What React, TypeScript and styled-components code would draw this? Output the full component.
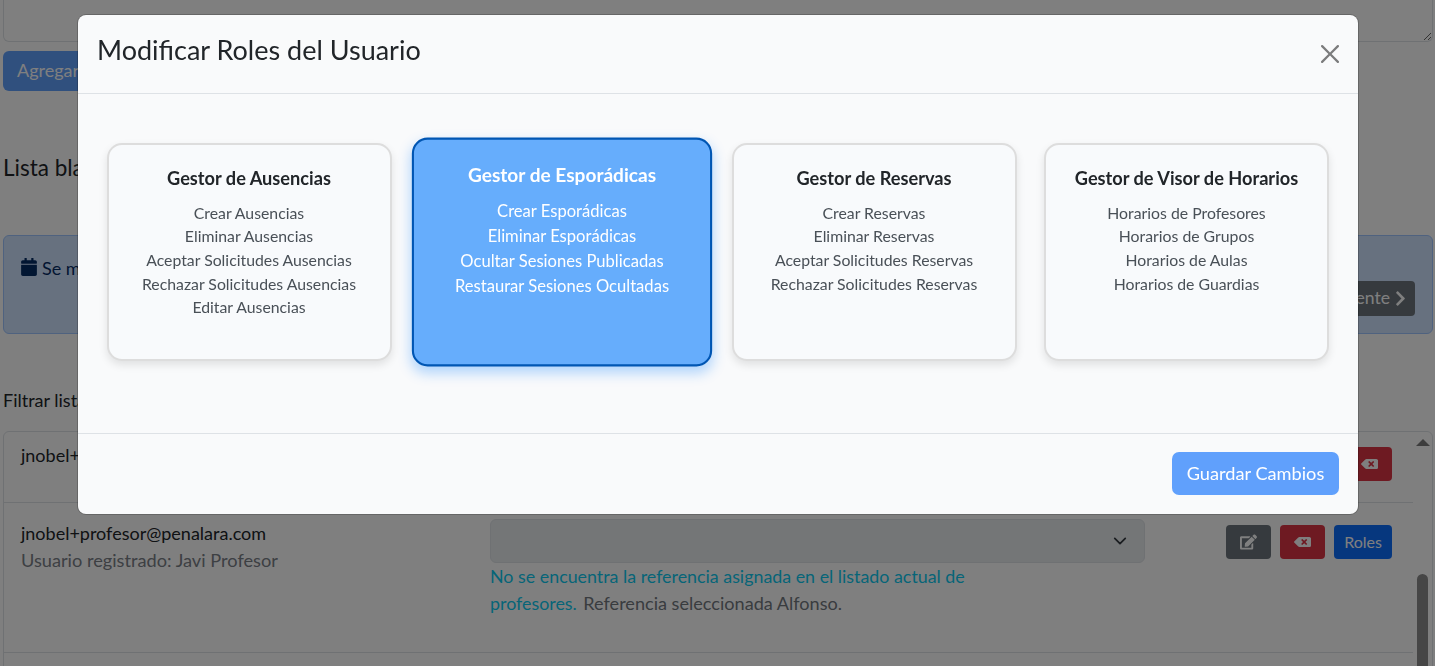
import React from "react";
import styled, { createGlobalStyle } from "styled-components";
import { FaBackspace, FaCalendar, FaChevronRight, FaEdit } from "react-icons/fa";

const Global = createGlobalStyle`
  html, body { margin: 0; padding: 0; height: 100%; overflow: hidden; background: #fff; }
  * { box-sizing: border-box; }
  body { font-family: Lato, "Liberation Sans", sans-serif; color: #212529; font-size: 18px; line-height: 1.5; }
`;

const Page = styled.div`
  height: 666px;
  overflow: hidden;
  padding: 0 2px 0 3px;
  display: flex;
  flex-direction: column;
`;

const NotesArea = styled.textarea`
  display: block;
  flex: none;
  width: 100%;
  height: 42px;
  border: 1px solid #dee2e6;
  border-top: 0;
  border-radius: 0 0 6px 6px;
  background: #fff;
  resize: vertical;
`;

const AddButton = styled.button`
  flex: none;
  align-self: flex-start;
  margin-top: 9px;
  height: 40px;
  padding: 0 14px 2px;
  border: 0;
  border-radius: 6px;
  background: #0d6efd;
  color: #fff;
  opacity: 0.65;
  font: inherit;
`;

const Heading = styled.h3`
  flex: none;
  margin: 62px 0 0;
  font-size: 22.5px;
  font-weight: 400;
  line-height: 30px;
`;

const Notice = styled.div`
  flex: none;
  margin-top: 52px;
  height: 99px;
  padding: 19px 17px 17px;
  display: flex;
  justify-content: space-between;
  background: #cfe2ff;
  border: 1px solid #9ec5fe;
  border-radius: 6px;
  color: #052c65;
`;

const NoticeText = styled.div`
  display: flex;
  gap: 5px;
  align-items: flex-start;
  svg { margin-top: 3px; width: 16px; height: 18px; }
`;

const NextButton = styled.button`
  align-self: flex-end;
  height: 35px;
  padding: 0 9px 2px 10px;
  display: flex;
  align-items: center;
  gap: 5px;
  border: 0;
  border-radius: 4px;
  background: #6c757d;
  color: #fff;
  font-family: inherit;
  font-size: 17.6px;
  svg { width: 11px; height: 17px; margin-top: 2px; }
`;

const FilterLabel = styled.div`
  flex: none;
  margin-top: 53px;
  height: 26px;
  font-size: 18px;
  line-height: 26px;
`;

const ListBox = styled.div`
  flex: none;
  margin-top: 18px;
  height: 300px;
  display: flex;
  border: 1px solid #dee2e6;
  border-radius: 6px;
  overflow: hidden;
`;

const Rows = styled.div`
  flex: 1;
  min-width: 0;
`;

const Row = styled.div<{ $top: number; $height: number }>`
  height: ${(p) => p.$height}px;
  padding: ${(p) => p.$top}px 21px 0 17px;
  display: grid;
  grid-template-columns: 469px 655px 1fr;
  border-bottom: 1px solid #dee2e6;
`;

const Email = styled.div`
  padding-top: 1px;
  line-height: 26px;
`;

const Muted = styled.div`
  margin-top: 1px;
  font-size: 18.2px;
  line-height: 27px;
  color: #7a8087;
`;

const RefSelect = styled.div`
  height: 44px;
  padding-right: 17px;
  display: flex;
  align-items: center;
  justify-content: flex-end;
  background: #e9ecef;
  border: 1px solid #dee2e6;
  border-radius: 6px;
  color: #343a40;
  svg { width: 14px; height: 14px; }
`;

const RefNote = styled.div`
  max-width: 500px;
  font-size: 17.85px;
  line-height: 27px;
  color: #72787f;
`;

const Info = styled.span`
  color: #0dcaf0;
`;

const RefName = styled.span`
  margin-left: 2px;
  font-size: 18.1px;
`;

const Actions = styled.div`
  margin-top: 6px;
  display: flex;
  justify-content: flex-end;
  align-items: flex-start;
  gap: 9px;
`;

const ActionButton = styled.button<{ $bg: string; $wide?: boolean }>`
  width: ${(p) => (p.$wide ? 58 : 45)}px;
  height: 34px;
  padding: 0 0 ${(p) => (p.$wide ? 2 : 0)}px;
  display: flex;
  align-items: center;
  justify-content: center;
  border: 0;
  border-radius: 4px;
  background: ${(p) => p.$bg};
  color: #fff;
  font-family: inherit;
  font-size: 16px;
  svg { width: 17px; height: 16px; }
`;

const ScrollColumn = styled.div`
  flex: none;
  width: 19px;
  display: flex;
  flex-direction: column;
  align-items: center;
`;

const ScrollArrow = styled.div`
  margin-top: 7px;
  width: 0;
  height: 0;
  border-left: 7px solid transparent;
  border-right: 7px solid transparent;
  border-bottom: 7px solid #7a7a7a;
`;

const ScrollThumb = styled.div`
  margin-top: 128px;
  width: 11px;
  height: 140px;
  border-radius: 6px;
  background: #8c8c8c;
`;

const Backdrop = styled.div`
  position: fixed;
  inset: 0;
  background: rgba(0, 0, 0, 0.5);
  padding: 15px 0 0 78px;
`;

const Modal = styled.div`
  width: 1280px;
  height: 499px;
  display: flex;
  flex-direction: column;
  background: #f9fafb;
  border-radius: 8px;
  box-shadow: 0 0 0 1px rgba(0, 0, 0, 0.2);
`;

const ModalHeader = styled.div`
  flex: none;
  height: 79px;
  padding: 15px 19px 0;
  display: flex;
  justify-content: space-between;
  border-bottom: 1px solid #dee2e6;
`;

const ModalTitle = styled.h5`
  margin: 0;
  font-size: 27px;
  font-weight: 400;
  line-height: 40px;
`;

const CloseButton = styled.button`
  width: 18px;
  height: 18px;
  margin-top: 15px;
  padding: 0;
  border: 0;
  background: none;
  opacity: 0.5;
  svg { display: block; width: 18px; height: 18px; }
`;

const ModalBody = styled.div`
  flex: none;
  height: 339px;
  padding: 49px 15px 0;
  display: grid;
  grid-template-columns: repeat(4, 312.5px);
  align-items: start;
`;

const RoleCard = styled.div<{ $selected?: boolean }>`
  margin: 0 ${(p) => (p.$selected ? 13 : 14)}px 0 13.5px;
  height: 218px;
  padding: 22px 6px 0;
  text-align: center;
  border-radius: 15px;
  border: 2px solid ${(p) => (p.$selected ? "#0056b3" : "#ddd")};
  background: ${(p) => (p.$selected ? "#66adfc" : "#f8fafc")};
  color: ${(p) => (p.$selected ? "#fff" : "#495057")};
  box-shadow: ${(p) =>
    p.$selected ? "0 6px 12px rgba(0, 123, 255, 0.3)" : "0 4px 8px rgba(0, 0, 0, 0.1)"};
  transform: ${(p) => (p.$selected ? "scale(1.05)" : "none")};
`;

const RoleTitle = styled.div<{ $selected?: boolean }>`
  margin-bottom: 11.8px;
  font-size: 18.2px;
  font-weight: 700;
  line-height: 22px;
  color: ${(p) => (p.$selected ? "#fff" : "#212529")};
`;

const RoleItem = styled.div`
  font-size: 15.8px;
  line-height: 23.6px;
`;

const ModalFooter = styled.div`
  flex: 1;
  padding: 18px 19px;
  display: flex;
  justify-content: flex-end;
  border-top: 1px solid #dee2e6;
`;

const SaveButton = styled.button`
  width: 167px;
  height: 43px;
  padding: 0 0 2px;
  border: 0;
  border-radius: 7px;
  background: #60a0fc;
  color: #fff;
  font-family: inherit;
  font-size: 18.2px;
`;

const roles = [
  { title: "Gestor de Ausencias", items: ["Crear Ausencias", "Eliminar Ausencias", "Aceptar Solicitudes Ausencias", "Rechazar Solicitudes Ausencias", "Editar Ausencias"] },
  { title: "Gestor de Esporádicas", selected: true, items: ["Crear Esporádicas", "Eliminar Esporádicas", "Ocultar Sesiones Publicadas", "Restaurar Sesiones Ocultadas"] },
  { title: "Gestor de Reservas", items: ["Crear Reservas", "Eliminar Reservas", "Aceptar Solicitudes Reservas", "Rechazar Solicitudes Reservas"] },
  { title: "Gestor de Visor de Horarios", items: ["Horarios de Profesores", "Horarios de Grupos", "Horarios de Aulas", "Horarios de Guardias"] },
];

export default function App() {
  return (
    <>
      <Global />
      <Page>
        <NotesArea />
        <AddButton>Agregar</AddButton>
        <Heading>Lista blanca de usuarios</Heading>
        <Notice>
          <NoticeText>
            <FaCalendar />
            <span>Se muestran los usuarios registrados</span>
          </NoticeText>
          <NextButton>
            Siguiente <FaChevronRight />
          </NextButton>
        </Notice>
        <FilterLabel>Filtrar lista de usuarios</FilterLabel>
        <ListBox>
          <Rows>
            <Row $top={9} $height={71}>
              <Email>jnobel+admin@penalara.com</Email>
              <div />
              <Actions>
                <ActionButton $bg="#dc3545"><FaBackspace /></ActionButton>
              </Actions>
            </Row>
            <Row $top={16} $height={150}>
              <div>
                <Email>jnobel+profesor@penalara.com</Email>
                <Muted>Usuario registrado: Javi Profesor</Muted>
              </div>
              <div>
                <RefSelect>
                  <svg viewBox="0 0 16 16" fill="none" stroke="currentColor" strokeWidth="2" strokeLinecap="round" strokeLinejoin="round">
                    <path d="m2 5 6 6 6-6" />
                  </svg>
                </RefSelect>
                <RefNote>
                  <Info>No se encuentra la referencia asignada en el listado actual de profesores.</Info>{" "}
                  <RefName>Referencia seleccionada Alfonso.</RefName>
                </RefNote>
              </div>
              <Actions>
                <ActionButton $bg="#6c757d"><FaEdit /></ActionButton>
                <ActionButton $bg="#dc3545"><FaBackspace /></ActionButton>
                <ActionButton $bg="#0d6efd" $wide>Roles</ActionButton>
              </Actions>
            </Row>
          </Rows>
          <ScrollColumn>
            <ScrollArrow />
            <ScrollThumb />
          </ScrollColumn>
        </ListBox>
      </Page>
      <Backdrop>
        <Modal>
          <ModalHeader>
            <ModalTitle>Modificar Roles del Usuario</ModalTitle>
            <CloseButton aria-label="Cerrar">
              <svg viewBox="0 0 16 16" fill="#000">
                <path d="M.293.293a1 1 0 011.414 0L8 6.586 14.293.293a1 1 0 111.414 1.414L9.414 8l6.293 6.293a1 1 0 01-1.414 1.414L8 9.414l-6.293 6.293a1 1 0 01-1.414-1.414L6.586 8 .293 1.707a1 1 0 010-1.414z" />
              </svg>
            </CloseButton>
          </ModalHeader>
          <ModalBody>
            {roles.map((r) => (
              <RoleCard key={r.title} $selected={r.selected}>
                <RoleTitle $selected={r.selected}>{r.title}</RoleTitle>
                {r.items.map((i) => (
                  <RoleItem key={i}>{i}</RoleItem>
                ))}
              </RoleCard>
            ))}
          </ModalBody>
          <ModalFooter>
            <SaveButton>Guardar Cambios</SaveButton>
          </ModalFooter>
        </Modal>
      </Backdrop>
    </>
  );
}
